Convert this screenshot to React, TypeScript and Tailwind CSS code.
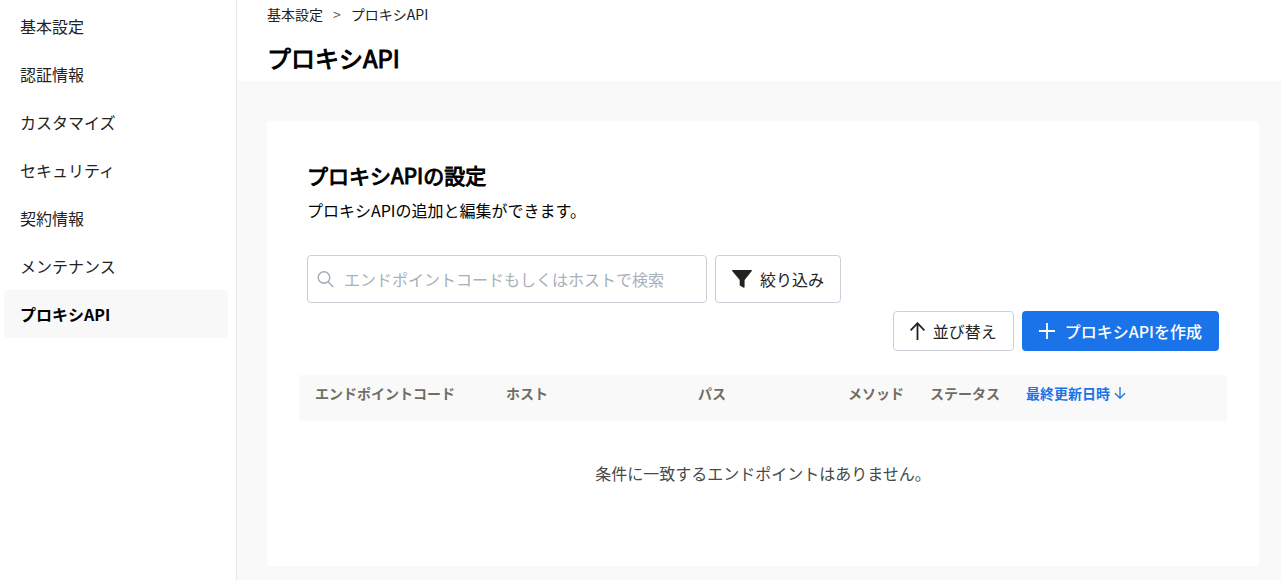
import React from 'react';

const menuItems = [
  '基本設定',
  '認証情報',
  'カスタマイズ',
  'セキュリティ',
  '契約情報',
  'メンテナンス',
  'プロキシAPI',
];

const columns = [
  { label: 'エンドポイントコード', width: 'w-[191px]' },
  { label: 'ホスト', width: 'w-48' },
  { label: 'パス', width: 'w-[150px]' },
  { label: 'メソッド', width: 'w-[82px]' },
  { label: 'ステータス', width: 'w-24' },
];

const SearchIcon: React.FC = () => (
  <svg
    viewBox="0 0 17 17"
    className="w-[17px] h-[17px] shrink-0 text-[#a2aab2]"
    fill="none"
    stroke="currentColor"
    strokeWidth="1.4"
    aria-hidden="true"
  >
    <circle cx="7" cy="6.5" r="5.8" />
    <path d="M11.2 10.7 16.2 16" />
  </svg>
);

const FilterIcon: React.FC = () => (
  <svg viewBox="0 0 20 18" className="w-5 h-[18px]" fill="currentColor" aria-hidden="true">
    <path d="M.8 0h18.4a.7.7 0 0 1 .6 1.1L12.6 10v6.8a.9.9 0 0 1-1.3.8L8.2 15.8a1 1 0 0 1-.5-.9V10L.2 1.1A.7.7 0 0 1 .8 0Z" />
  </svg>
);

const ArrowUpIcon: React.FC = () => (
  <svg
    viewBox="0 0 15 18"
    className="w-[15px] h-[18px]"
    fill="none"
    stroke="currentColor"
    strokeWidth="1.8"
    aria-hidden="true"
  >
    <path d="M7.5 18V1.2M.6 8.3l6.9-7.1 6.9 7.1" />
  </svg>
);

const PlusIcon: React.FC = () => (
  <svg
    viewBox="0 0 16 16"
    className="w-4 h-4"
    fill="none"
    stroke="currentColor"
    strokeWidth="1.8"
    aria-hidden="true"
  >
    <path d="M8 0v16M0 8h16" />
  </svg>
);

const ArrowDownIcon: React.FC = () => (
  <svg
    viewBox="0 0 12 12"
    className="w-3 h-3"
    fill="none"
    stroke="currentColor"
    strokeWidth="1.3"
    aria-hidden="true"
  >
    <path d="M6 0v11.2M1 6.2l5 5 5-5" />
  </svg>
);

const Sidebar: React.FC = () => (
  <nav className="w-[237px] shrink-0 border-r border-[#e8e8e8] bg-white pl-1 pr-2 pt-0.5">
    <ul>
      {menuItems.map((item) => (
        <li key={item}>
          <a
            href="#"
            className={
              item === 'プロキシAPI'
                ? 'flex items-center h-12 px-4 rounded bg-[#f8f8f8] font-bold text-black'
                : 'flex items-center h-12 px-4 rounded text-[#23221e]'
            }
          >
            {item}
          </a>
        </li>
      ))}
    </ul>
  </nav>
);

const EndpointTable: React.FC = () => (
  <div className="-mx-2 mt-6">
    <table className="w-full table-fixed">
      <thead>
        <tr className="h-[46px] bg-[#f9f9f9] text-left text-sm text-[#706d65]">
          {columns.map((c) => (
            <th key={c.label} className={`${c.width} pl-4 pb-2.5 font-bold whitespace-nowrap`}>
              {c.label}
            </th>
          ))}
          <th className="pl-4 pb-2.5">
            <button type="button" className="flex items-center gap-1 font-bold text-[#1a73e8]">
              最終更新日時
              <ArrowDownIcon />
            </button>
          </th>
        </tr>
      </thead>
      <tbody>
        <tr>
          <td colSpan={6} className="py-10 text-center text-[#484848]">
            条件に一致するエンドポイントはありません。
          </td>
        </tr>
      </tbody>
    </table>
  </div>
);

export default function App() {
  return (
    <div
      lang="ja"
      className="flex min-h-screen bg-[#f9f9f9] font-['Noto_Sans_CJK_JP',sans-serif] text-base text-black"
    >
      <Sidebar />
      <div className="flex-1 min-w-0">
        <header className="bg-white pl-[30px] pr-6 pt-1 pb-[5px]">
          <div className="flex items-center gap-2.5 text-sm text-[#23221e]">
            <a href="#">基本設定</a>
            <span className="text-[#555555]">&gt;</span>
            <span>プロキシAPI</span>
          </div>
          <h1 className="mt-4 text-2xl leading-9 [-webkit-text-stroke:1px]">プロキシAPI</h1>
        </header>
        <main className="pl-[30px] pr-[22px] pt-10 pb-3">
          <section className="rounded bg-white px-10 pt-[39px] pb-[41px]">
            <h2 className="text-[21px] leading-[30px] [-webkit-text-stroke:1px]">プロキシAPIの設定</h2>
            <p className="mt-2">プロキシAPIの追加と編集ができます。</p>
            <div className="mt-[33px] flex gap-2">
              <label className="flex items-center gap-2.5 w-[400px] h-12 px-[9px] rounded border border-[#cdd0d8]">
                <SearchIcon />
                <input
                  type="text"
                  aria-label="検索"
                  placeholder="エンドポイントコードもしくはホストで検索"
                  className="flex-1 min-w-0 outline-none placeholder:text-[#a8b0b8]"
                />
              </label>
              <button
                type="button"
                className="flex items-center gap-2 h-12 px-4 rounded border border-[#cdd0d8] text-[#23221e]"
              >
                <FilterIcon />
                絞り込み
              </button>
            </div>
            <div className="mt-2 flex justify-end gap-2">
              <button
                type="button"
                className="flex items-center gap-2 h-10 px-4 rounded border border-[#cdd0d8] text-[#23221e]"
              >
                <ArrowUpIcon />
                並び替え
              </button>
              <button
                type="button"
                className="flex items-center gap-2.5 h-10 px-[17px] rounded bg-[#1a73e8] font-medium text-white"
              >
                <PlusIcon />
                プロキシAPIを作成
              </button>
            </div>
            <EndpointTable />
          </section>
        </main>
      </div>
    </div>
  );
}
